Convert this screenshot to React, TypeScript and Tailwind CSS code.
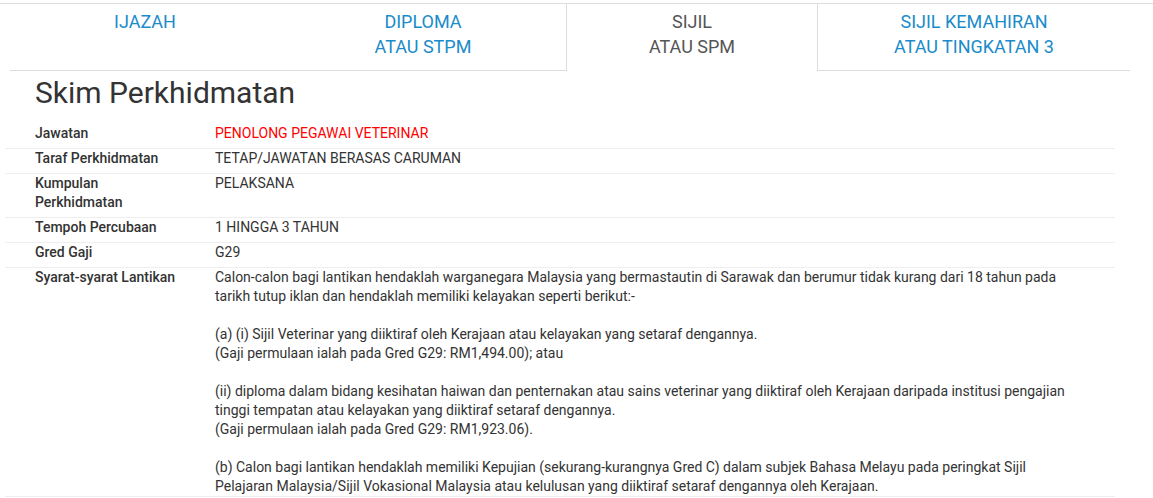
const tabs = [
  { lines: ["IJAZAH"], w: "w-[270px]" },
  { lines: ["DIPLOMA", "ATAU STPM"], w: "w-[286px]" },
  { lines: ["SIJIL", "ATAU SPM"], w: "w-[252px]", active: true },
  { lines: ["SIJIL KEMAHIRAN", "ATAU TINGKATAN 3"], w: "w-[312px]" },
];

const rows: { label: string; value: React.ReactNode; red?: boolean }[] = [
  { label: "Jawatan", value: "PENOLONG PEGAWAI VETERINAR", red: true },
  { label: "Taraf Perkhidmatan", value: "TETAP/JAWATAN BERASAS CARUMAN" },
  { label: "Kumpulan Perkhidmatan", value: "PELAKSANA" },
  { label: "Tempoh Percubaan", value: "1 HINGGA 3 TAHUN" },
  { label: "Gred Gaji", value: "G29" },
  {
    label: "Syarat-syarat Lantikan",
    value: (
      <>
        <p>
          Calon-calon bagi lantikan hendaklah warganegara Malaysia yang bermastautin di Sarawak dan berumur tidak kurang
          dari 18 tahun pada tarikh tutup iklan dan hendaklah memiliki kelayakan seperti berikut:-
        </p>
        <br />
        <p>
          (a) (i) Sijil Veterinar yang diiktiraf oleh Kerajaan atau kelayakan yang setaraf dengannya.
          <br />
          (Gaji permulaan ialah pada Gred G29: RM1,494.00); atau
        </p>
        <br />
        <p>
          (ii) diploma dalam bidang kesihatan haiwan dan penternakan atau sains veterinar yang diiktiraf oleh Kerajaan
          daripada institusi pengajian tinggi tempatan atau kelayakan yang diiktiraf setaraf dengannya.
          <br />
          (Gaji permulaan ialah pada Gred G29: RM1,923.06).
        </p>
        <br />
        <p>
          (b) Calon bagi lantikan hendaklah memiliki Kepujian (sekurang-kurangnya Gred C) dalam subjek Bahasa Melayu pada
          peringkat Sijil Pelajaran Malaysia/Sijil Vokasional Malaysia atau kelulusan yang diiktiraf setaraf dengannya
          oleh Kerajaan.
        </p>
      </>
    ),
  },
];

export default function App() {
  return (
    <div className="min-h-[498px] bg-white pt-[3px] font-['Roboto',sans-serif] text-[#333]">
      <div className="border-t border-[#ddd]">
        <div className="ml-[10px] flex w-[1120px]">
          {tabs.map((t) => (
            <div
              key={t.lines[0]}
              className={
                t.active
                  ? `${t.w} h-[67px] border-x border-[#ddd] pt-[5px] text-center text-[18px] leading-[25px] text-[#555]`
                  : `${t.w} h-[67px] border-b border-[#ddd] pt-[5px] text-center text-[18px] leading-[25px] text-[#1b8bc9]`
              }
            >
              {t.lines.map((l) => (
                <div key={l}>{l}</div>
              ))}
            </div>
          ))}
        </div>
      </div>

      <h2 className="ml-[35px] mt-[2px] text-[30px] leading-[40px] text-[#333]">Skim Perkhidmatan</h2>

      <div className="ml-[5px] mt-[11px] w-[1110px] text-[14px] leading-[19px]">
        {rows.map((r, i) => (
          <div
            key={r.label}
            className={`flex ${i > 0 ? "border-t border-[#eee]" : ""} ${
              i === rows.length - 1 ? "border-b border-[#eee] pb-0" : "pb-[5px]"
            }`}
          >
            <div className="w-[210px] shrink-0 pl-[30px] pr-[30px] font-medium text-[#333]">{r.label}</div>
            <div className={`w-[855px] ${r.red ? "text-[#f00]" : "text-[#333]"}`}>{r.value}</div>
          </div>
        ))}
      </div>
    </div>
  );
}
